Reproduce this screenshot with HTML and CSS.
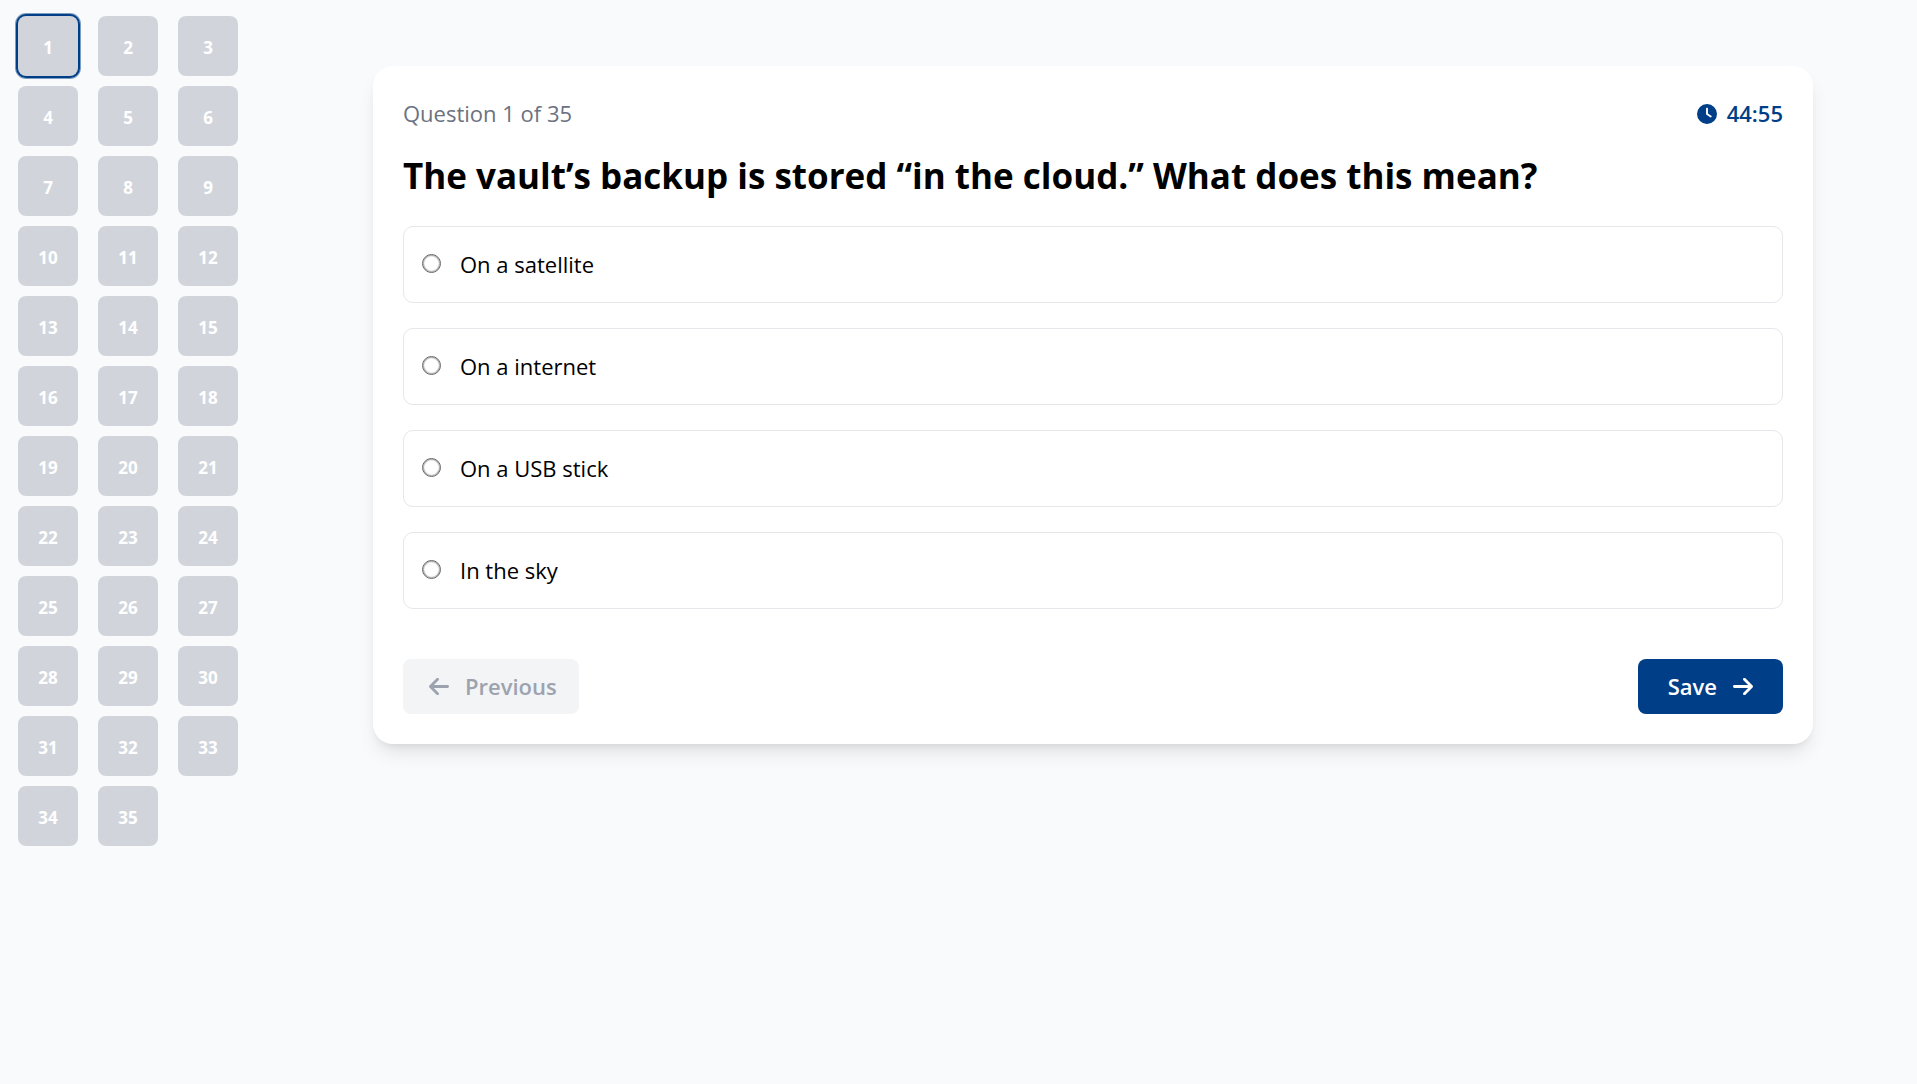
FILE: index.html
```html
<!DOCTYPE html>
<html lang="en">
<head>
<meta charset="utf-8">
<meta name="viewport" content="width=device-width, initial-scale=1">
<title>Quiz</title>
<link rel="stylesheet" href="styles.css">
</head>
<body>
<div class="layout">
  <nav class="sidebar" aria-label="Questions">
    <button type="button" class="number current" aria-current="true">1</button>
    <button type="button" class="number">2</button>
    <button type="button" class="number">3</button>
    <button type="button" class="number">4</button>
    <button type="button" class="number">5</button>
    <button type="button" class="number">6</button>
    <button type="button" class="number">7</button>
    <button type="button" class="number">8</button>
    <button type="button" class="number">9</button>
    <button type="button" class="number">10</button>
    <button type="button" class="number">11</button>
    <button type="button" class="number">12</button>
    <button type="button" class="number">13</button>
    <button type="button" class="number">14</button>
    <button type="button" class="number">15</button>
    <button type="button" class="number">16</button>
    <button type="button" class="number">17</button>
    <button type="button" class="number">18</button>
    <button type="button" class="number">19</button>
    <button type="button" class="number">20</button>
    <button type="button" class="number">21</button>
    <button type="button" class="number">22</button>
    <button type="button" class="number">23</button>
    <button type="button" class="number">24</button>
    <button type="button" class="number">25</button>
    <button type="button" class="number">26</button>
    <button type="button" class="number">27</button>
    <button type="button" class="number">28</button>
    <button type="button" class="number">29</button>
    <button type="button" class="number">30</button>
    <button type="button" class="number">31</button>
    <button type="button" class="number">32</button>
    <button type="button" class="number">33</button>
    <button type="button" class="number">34</button>
    <button type="button" class="number">35</button>
  </nav>
  <main class="content">
    <form class="card">
      <div class="status">
        <span class="progress">Question 1 of 35</span>
        <span class="timer">
          <svg class="clock" viewBox="0 0 512 512" aria-hidden="true"><path d="M256 0a256 256 0 1 1 0 512A256 256 0 1 1 256 0zM232 120V256c0 8 4 15.500 10.700 20l96 64c11 7.400 25.900 4.400 33.300-6.700s4.400-25.900-6.700-33.300L280 243.200V120c0-13.300-10.700-24-24-24s-24 10.700-24 24z"/></svg>
          <span>44:55</span>
        </span>
      </div>
      <h1 class="question">The vault’s backup is stored “in the cloud.” What does this mean?</h1>
      <div class="options" role="radiogroup" aria-label="Answers">
        <label class="option"><input type="radio" name="answer" value="1"><span>On a satellite</span></label>
        <label class="option"><input type="radio" name="answer" value="2"><span>On a internet</span></label>
        <label class="option"><input type="radio" name="answer" value="3"><span>On a USB stick</span></label>
        <label class="option"><input type="radio" name="answer" value="4"><span>In the sky</span></label>
      </div>
      <div class="actions">
        <button type="button" class="button previous" disabled>
          <svg class="arrow" viewBox="0 0 448 512" aria-hidden="true"><path d="M9.400 233.400c-12.500 12.500-12.500 32.800 0 45.300l160 160c12.500 12.500 32.800 12.500 45.300 0s12.500-32.800 0-45.300L109.200 288 416 288c17.700 0 32-14.300 32-32s-14.300-32-32-32l-306.700 0L214.600 118.600c12.500-12.500 12.500-32.800 0-45.300s-32.800-12.500-45.300 0l-160 160z"/></svg>
          <span>Previous</span>
        </button>
        <button type="submit" class="button save">
          <span>Save</span>
          <svg class="arrow" viewBox="0 0 448 512" aria-hidden="true"><path d="M438.600 278.600c12.500-12.500 12.500-32.800 0-45.300l-160-160c-12.500-12.500-32.800-12.500-45.300 0s-12.500 32.800 0 45.300L338.800 224 32 224c-17.700 0-32 14.300-32 32s14.300 32 32 32l306.700 0L233.400 393.400c-12.500 12.500-12.500 32.800 0 45.300s32.800 12.500 45.300 0l160-160z"/></svg>
        </button>
      </div>
    </form>
  </main>
</div>
</body>
</html>
```

FILE: styles.css
```css
*, *::before, *::after {
  box-sizing: border-box;
}

body {
  margin: 0;
  background: #f9fafc;
  color: #000;
  font-family: "Segoe UI", "Open Sans", "Noto Sans", sans-serif;
  font-size: 22px;
  line-height: 35px;
}

button {
  border: 0;
  font-family: inherit;
  cursor: pointer;
}

.layout {
  display: flex;
  align-items: flex-start;
  min-height: 100vh;
}

.sidebar {
  flex: 0 0 269px;
  display: grid;
  grid-template-columns: repeat(3, 60px);
  gap: 10px 20px;
  padding: 16px 18px;
}

.number {
  height: 60px;
  padding: 2px 0 0;
  border-radius: 8px;
  background: #d1d5db;
  color: #fff;
  font-size: 17px;
  font-weight: 700;
  line-height: 25px;
}

.current {
  box-shadow: 0 0 0 2px #003e87, 0 0 0 3px #7d9ec3;
}

.content {
  flex: 1;
  min-width: 0;
  padding: 66px 40px 40px;
}

.card {
  max-width: 1440px;
  margin: 0 auto;
  padding: 30px;
  border-radius: 20px;
  background: #fff;
  box-shadow: 0 12px 19px -4px rgb(0 0 0 / 10%), 0 5px 8px -5px rgb(0 0 0 / 10%);
}

.status,
.timer,
.option,
.actions,
.button {
  display: flex;
  align-items: center;
}

.status,
.actions {
  justify-content: space-between;
}

.progress {
  color: #6b7280;
}

.timer {
  gap: 10px;
  color: #003e87;
  font-weight: 600;
}

.clock {
  width: 20px;
  height: 20px;
  fill: currentColor;
}

.question {
  margin: 20px 0 25px;
  font-size: 35px;
  font-weight: 700;
  line-height: 50px;
}

.options {
  display: grid;
  gap: 25px;
}

.option {
  gap: 19px;
  padding: 20px 18px;
  border: 1px solid #e5e7eb;
  border-radius: 10px;
  cursor: pointer;
}

.option input {
  appearance: none;
  flex: none;
  width: 19px;
  height: 19px;
  margin: 0 0 2px;
  border: 1px solid #666;
  border-radius: 50%;
  background: #fff;
  box-shadow: inset 0 0 1px 1px #aaa;
}

.option input:checked {
  border: 5px solid #003e87;
}

.actions {
  margin-top: 50px;
}

.button {
  padding: 10px 30px;
  border-radius: 8px;
  font-size: 22px;
  font-weight: 600;
  line-height: 35px;
}

.previous {
  gap: 16px;
  padding: 10px 22px 10px 26px;
  background: #f3f4f6;
  color: #9ca3af;
}

.save {
  gap: 16px;
  background: #003e87;
  color: #fff;
}

.arrow {
  width: 20px;
  height: 23px;
  fill: currentColor;
}
```
